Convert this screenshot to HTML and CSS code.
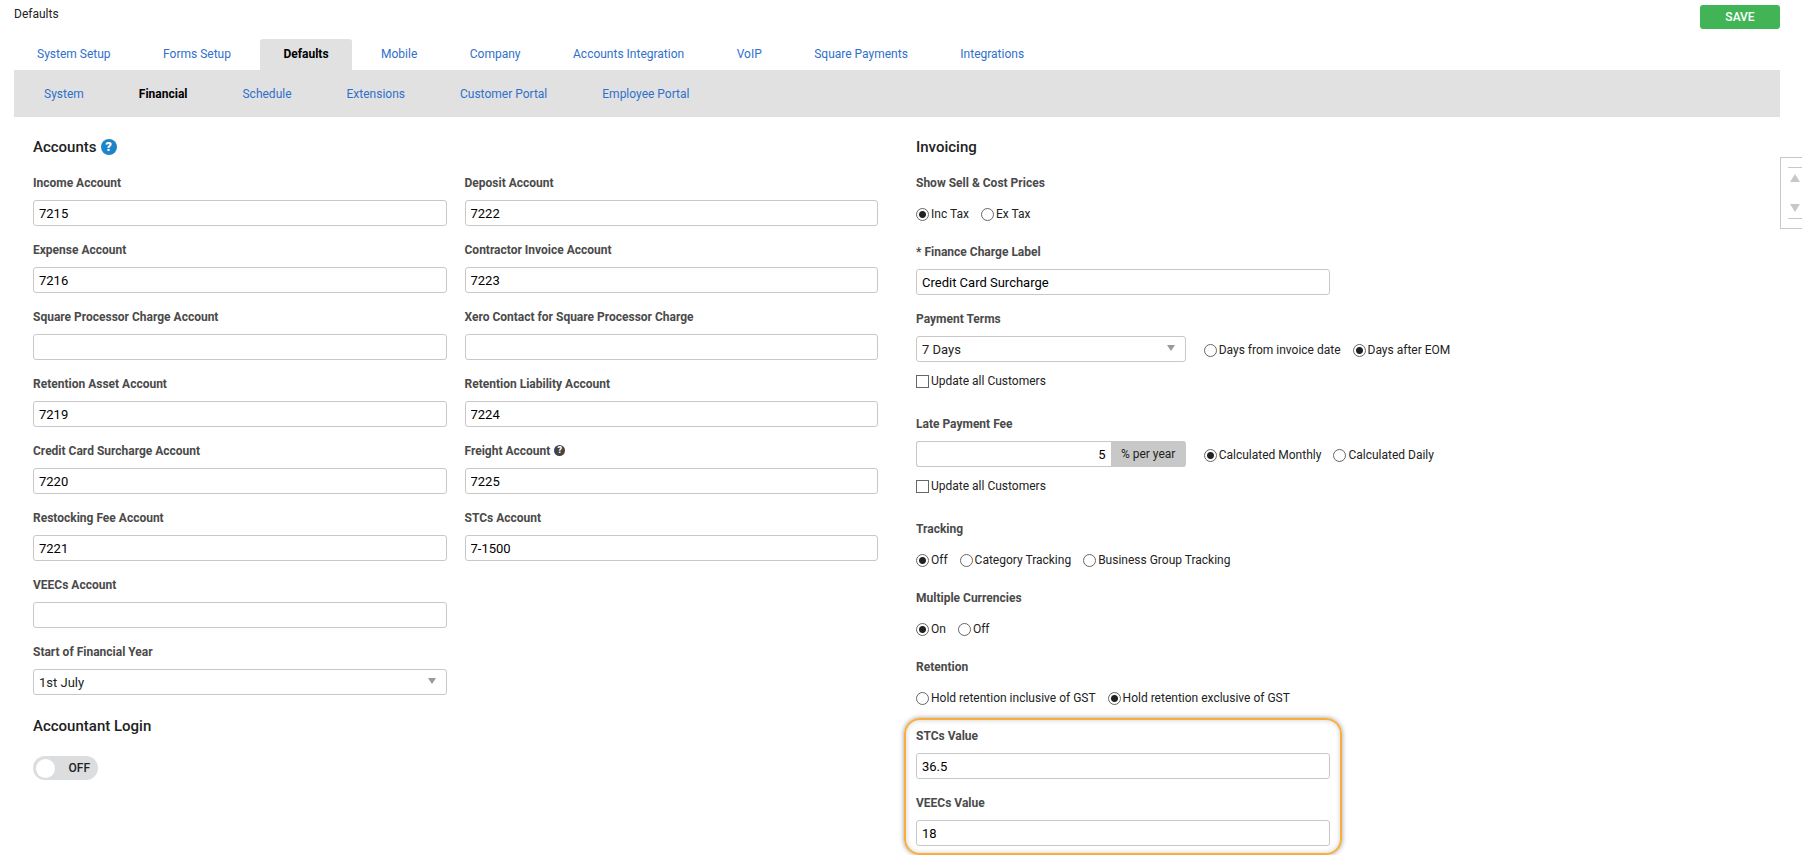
FILE: index.html
```html
<!DOCTYPE html>
<html lang="en">
<head>
  <meta charset="UTF-8">
  <title>Defaults</title>
  <link rel="stylesheet" href="styles.css">
</head>
<body>
<header class="page-header">
  <h1 class="page-title">Defaults</h1>
  <button type="submit" form="defaults" class="save">SAVE</button>
</header>
<nav class="tabs">
  <a href="#">System Setup</a>
  <a href="#">Forms Setup</a>
  <a href="#" class="active">Defaults</a>
  <a href="#">Mobile</a>
  <a href="#">Company</a>
  <a href="#">Accounts Integration</a>
  <a href="#">VoIP</a>
  <a href="#">Square Payments</a>
  <a href="#">Integrations</a>
</nav>
<nav class="subtabs">
  <a href="#">System</a>
  <a href="#" class="active">Financial</a>
  <a href="#">Schedule</a>
  <a href="#">Extensions</a>
  <a href="#">Customer Portal</a>
  <a href="#">Employee Portal</a>
</nav>

<form id="defaults" class="content">
  <section class="column">
    <h2 class="heading">Accounts <a href="#" class="help">?</a></h2>
    <div class="accounts">
      <div class="field">
        <label class="label" for="income">Income Account</label>
        <input class="control" type="text" id="income" value="7215">
      </div>
      <div class="field">
        <label class="label" for="deposit">Deposit Account</label>
        <input class="control" type="text" id="deposit" value="7222">
      </div>
      <div class="field">
        <label class="label" for="expense">Expense Account</label>
        <input class="control" type="text" id="expense" value="7216">
      </div>
      <div class="field">
        <label class="label" for="contractor">Contractor Invoice Account</label>
        <input class="control" type="text" id="contractor" value="7223">
      </div>
      <div class="field">
        <label class="label" for="square">Square Processor Charge Account</label>
        <input class="control" type="text" id="square">
      </div>
      <div class="field">
        <label class="label" for="xero">Xero Contact for Square Processor Charge</label>
        <input class="control" type="text" id="xero">
      </div>
      <div class="field">
        <label class="label" for="asset">Retention Asset Account</label>
        <input class="control" type="text" id="asset" value="7219">
      </div>
      <div class="field">
        <label class="label" for="liability">Retention Liability Account</label>
        <input class="control" type="text" id="liability" value="7224">
      </div>
      <div class="field">
        <label class="label" for="surcharge">Credit Card Surcharge Account</label>
        <input class="control" type="text" id="surcharge" value="7220">
      </div>
      <div class="field">
        <label class="label" for="freight">Freight Account <span class="hint">?</span></label>
        <input class="control" type="text" id="freight" value="7225">
      </div>
      <div class="field">
        <label class="label" for="restocking">Restocking Fee Account</label>
        <input class="control" type="text" id="restocking" value="7221">
      </div>
      <div class="field">
        <label class="label" for="stcs">STCs Account</label>
        <input class="control" type="text" id="stcs" value="7-1500">
      </div>
      <div class="field first">
        <label class="label" for="veecs">VEECs Account</label>
        <input class="control" type="text" id="veecs">
      </div>
      <div class="field first">
        <label class="label" for="year">Start of Financial Year</label>
        <div class="select">
          <select class="control" id="year"><option>1st July</option></select>
        </div>
      </div>
    </div>
    <h2 class="heading login">Accountant Login</h2>
    <label class="toggle"><input type="checkbox"><span>OFF</span></label>
  </section>

  <section class="column">
    <h2 class="heading">Invoicing</h2>
    <div class="stack">
      <div class="field" role="radiogroup" aria-labelledby="prices">
        <span class="label" id="prices">Show Sell &amp; Cost Prices</span>
        <div class="options">
          <label class="option"><input type="radio" name="prices" checked>Inc Tax</label>
          <label class="option"><input type="radio" name="prices">Ex Tax</label>
        </div>
      </div>
      <div class="field half">
        <label class="label" for="finance">* Finance Charge Label</label>
        <input class="control" type="text" id="finance" value="Credit Card Surcharge">
      </div>
      <div class="field">
        <label class="label" for="terms">Payment Terms</label>
        <div class="thirds">
          <div class="select">
            <select class="control" id="terms"><option>7 Days</option></select>
          </div>
          <div class="options">
            <label class="option"><input type="radio" name="days">Days from invoice date</label>
            <label class="option"><input type="radio" name="days" checked>Days after EOM</label>
          </div>
        </div>
        <div class="update">
          <label class="option"><input type="checkbox">Update all Customers</label>
        </div>
      </div>
      <div class="field">
        <label class="label" for="late">Late Payment Fee</label>
        <div class="thirds">
          <div class="addon">
            <input class="control" type="text" id="late" value="5">
            <span class="unit">% per year</span>
          </div>
          <div class="options">
            <label class="option"><input type="radio" name="calc" checked>Calculated Monthly</label>
            <label class="option"><input type="radio" name="calc">Calculated Daily</label>
          </div>
        </div>
        <div class="update">
          <label class="option"><input type="checkbox">Update all Customers</label>
        </div>
      </div>
      <div class="field" role="radiogroup" aria-labelledby="tracking">
        <span class="label" id="tracking">Tracking</span>
        <div class="options">
          <label class="option"><input type="radio" name="tracking" checked>Off</label>
          <label class="option"><input type="radio" name="tracking">Category Tracking</label>
          <label class="option"><input type="radio" name="tracking">Business Group Tracking</label>
        </div>
      </div>
      <div class="field" role="radiogroup" aria-labelledby="currencies">
        <span class="label" id="currencies">Multiple Currencies</span>
        <div class="options">
          <label class="option"><input type="radio" name="currencies" checked>On</label>
          <label class="option"><input type="radio" name="currencies">Off</label>
        </div>
      </div>
      <div class="field" role="radiogroup" aria-labelledby="retention">
        <span class="label" id="retention">Retention</span>
        <div class="options">
          <label class="option"><input type="radio" name="retention">Hold retention inclusive of GST</label>
          <label class="option"><input type="radio" name="retention" checked>Hold retention exclusive of GST</label>
        </div>
      </div>
      <div class="half">
        <div class="stack highlight">
          <div class="field">
            <label class="label" for="stcs-value">STCs Value</label>
            <input class="control" type="text" id="stcs-value" value="36.5">
          </div>
          <div class="field">
            <label class="label" for="veecs-value">VEECs Value</label>
            <input class="control" type="text" id="veecs-value" value="18">
          </div>
        </div>
      </div>
    </div>
  </section>
</form>

<!-- scroll handle docked on the window edge -->
<aside class="scroller">
  <button type="button" class="up" aria-label="Scroll up"></button>
  <button type="button" class="down" aria-label="Scroll down"></button>
</aside>
</body>
</html>
```
FILE: styles.css
```css
* {
  box-sizing: border-box;
}
body {
  margin: 0;
  padding: 0 22px 0 14px;
  font: 12px/16px Roboto, sans-serif;
  color: #222;
  background: #fff;
}
a {
  color: #2f70cc;
  text-decoration: none;
}
input, select, button {
  margin: 0;
  font-family: inherit;
}

/* header and tabs */
.page-header {
  display: flex;
  justify-content: space-between;
  padding: 5px 0 10px;
}
.page-title {
  margin: 0;
  font-size: 12px;
  font-weight: 400;
  line-height: 18px;
}
.save {
  width: 80px;
  height: 24px;
  padding: 0;
  border: 0;
  border-radius: 3px;
  background: #41b556;
  color: #fff;
  font-size: 12px;
  font-weight: 500;
}
.tabs {
  font-size: 14px;
}
.tabs a {
  display: inline-block;
  margin-right: 3px;
  padding: 7px 23px 8px;
  border-radius: 3px 3px 0 0;
  font-size: 12px;
}
.tabs .active {
  background: #e1e1e1;
}
.tabs .active, .subtabs .active {
  color: #000;
  font-weight: 700;
}
.subtabs {
  display: flex;
  gap: 55px;
  padding: 16px 30px 15px;
  background: #e1e1e1;
}

/* form layout */
.content {
  display: grid;
  grid-template-columns: 1fr 1fr;
}
.column {
  padding: 20px 19px 0;
}
.heading {
  display: flex;
  align-items: center;
  gap: 4px;
  margin: 0 0 18px;
  font-size: 15px;
  font-weight: 500;
  line-height: 20px;
}
.login {
  margin-top: 21px;
  margin-bottom: 20px;
}
.accounts {
  display: grid;
  grid-template-columns: 1fr 1fr;
  gap: 16px 18px;
}
.first {
  grid-column: 1;
}
.stack {
  display: flex;
  flex-direction: column;
  gap: 16px;
}
.half {
  width: calc(50% - 9px);
}
.thirds {
  display: grid;
  grid-template-columns: repeat(3, 1fr);
  gap: 18px;
}
.thirds .options {
  grid-column: span 2;
  height: 26px;
  padding-top: 2px;
}

/* controls */
.label {
  display: block;
  height: 16px;
  margin-bottom: 9px;
  color: #4a4a4a;
  font-weight: 700;
}
.control {
  display: block;
  width: 100%;
  height: 26px;
  padding: 0 5px;
  border: 1px solid #c8c8c8;
  border-radius: 3px;
  background: #fff;
  color: #000;
  font-size: 13px;
}
.select {
  position: relative;
}
.select .control {
  appearance: none;
  color: #222;
}
.select::after {
  content: "";
  position: absolute;
  top: 9px;
  right: 11px;
  border: solid transparent;
  border-width: 6px 4px 0;
  border-top-color: #999;
  pointer-events: none;
}
.addon {
  display: flex;
}
.addon .control {
  flex: 1;
  min-width: 0;
  border-right: 0;
  border-radius: 3px 0 0 3px;
  text-align: right;
}
.unit {
  width: 75px;
  border-radius: 0 3px 3px 0;
  background: #c8c8c8;
  line-height: 26px;
  text-align: center;
}
.options {
  display: flex;
  align-items: center;
  gap: 12px;
  height: 28px;
}
.option {
  display: flex;
  align-items: center;
  gap: 2px;
}
.option input {
  appearance: none;
  width: 13px;
  height: 13px;
  border: 1px solid #666;
  background: #fff;
}
.option input[type="radio"] {
  border-radius: 50%;
}
.option input[type="radio"]:checked {
  background: radial-gradient(circle, #222 0 3px, #fff 4px);
}
.update {
  display: flex;
  padding: 11px 0;
}
.help, .hint {
  display: inline-block;
  border-radius: 50%;
  color: #fff;
  font-weight: 900;
  text-align: center;
}
.help {
  width: 16px;
  height: 16px;
  background: #1c84c9;
  font-size: 13px;
  line-height: 16px;
}
.hint {
  width: 11px;
  height: 11px;
  margin-left: 1px;
  background: #444;
  font-size: 9px;
  line-height: 11px;
  vertical-align: 2px;
}
.toggle {
  display: flex;
  align-items: center;
  justify-content: space-between;
  width: 65px;
  height: 24px;
  padding: 0 8px 0 3px;
  border-radius: 12px;
  background: #dcdddf;
  font-weight: 500;
}
.toggle input {
  appearance: none;
  width: 19px;
  height: 19px;
  border-radius: 50%;
  background: #fff;
}
.highlight {
  margin: -10px -12px 0;
  padding: 8px 10px 7px;
  border: 2px solid #f9ae3b;
  border-radius: 16px;
  box-shadow: 0 0 5px rgba(0, 0, 0, .4), inset 0 0 5px rgba(0, 0, 0, .2);
}

/* scroll handle */
.scroller {
  position: absolute;
  top: 157px;
  right: 0;
  display: flex;
  flex-direction: column;
  justify-content: space-between;
  width: 22px;
  height: 72px;
  padding: 9px 0 9px 7px;
  border: 1px solid #c8c8c8;
  border-right: 0;
}
.scroller button {
  display: flex;
  height: 16px;
  padding: 6px 2px;
  border: 0;
  background: none;
}
.scroller .up {
  border-top: 1px solid #c8c8c8;
}
.scroller .down {
  align-items: flex-end;
  border-bottom: 1px solid #c8c8c8;
}
.scroller button::before {
  content: "";
  border: solid transparent;
  border-width: 0 5px 8px;
  border-bottom-color: #c8c8c8;
}
.scroller .down::before {
  border-width: 8px 5px 0;
  border-top-color: #c8c8c8;
}
```
